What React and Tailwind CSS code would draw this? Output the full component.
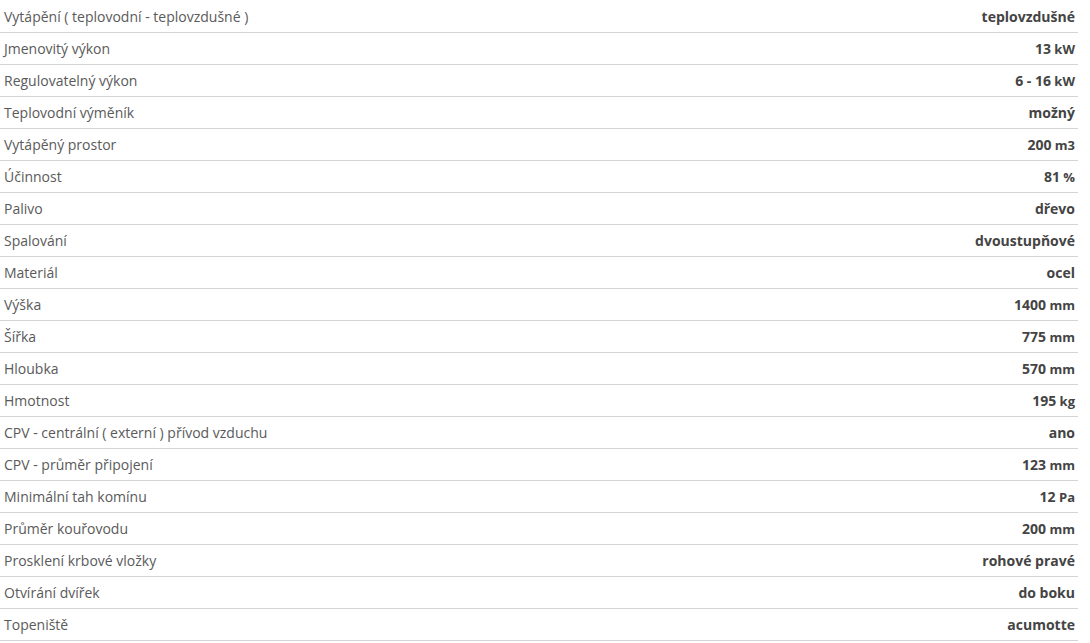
import React from 'react';

const params = [
  ['Vytápění ( teplovodní - teplovzdušné )', 'teplovzdušné', ''],
  ['Jmenovitý výkon', '13', 'kW'],
  ['Regulovatelný výkon', '6 - 16', 'kW'],
  ['Teplovodní výměník', 'možný', ''],
  ['Vytápěný prostor', '200', 'm3'],
  ['Účinnost', '81', '%'],
  ['Palivo', 'dřevo', ''],
  ['Spalování', 'dvoustupňové', ''],
  ['Materiál', 'ocel', ''],
  ['Výška', '1400', 'mm'],
  ['Šířka', '775', 'mm'],
  ['Hloubka', '570', 'mm'],
  ['Hmotnost', '195', 'kg'],
  ['CPV - centrální ( externí ) přívod vzduchu', 'ano', ''],
  ['CPV - průměr připojení', '123', 'mm'],
  ['Minimální tah komínu', '12', 'Pa'],
  ['Průměr kouřovodu', '200', 'mm'],
  ['Prosklení krbové vložky', 'rohové pravé', ''],
  ['Otvírání dvířek', 'do boku', ''],
  ['Topeniště', 'acumotte', ''],
];

export default function App() {
  return (
    <div className="w-[1090px] h-[643px] bg-white pt-[1px] font-['Open_Sans',sans-serif]">
      <div className="w-[1078px]">
        {params.map(([label, value, unit]) => (
          <div
            key={label}
            className="h-8 flex items-center justify-between pl-[4px] pr-[3px] border-b border-[#d4d4d4]"
          >
            <span className="text-[14px] text-[#5a5a5a]">{label}</span>
            <span className="text-[14px] font-bold text-[#444]">
              {value}
              {unit && <span className="text-[13px]"> {unit}</span>}
            </span>
          </div>
        ))}
      </div>
    </div>
  );
}
